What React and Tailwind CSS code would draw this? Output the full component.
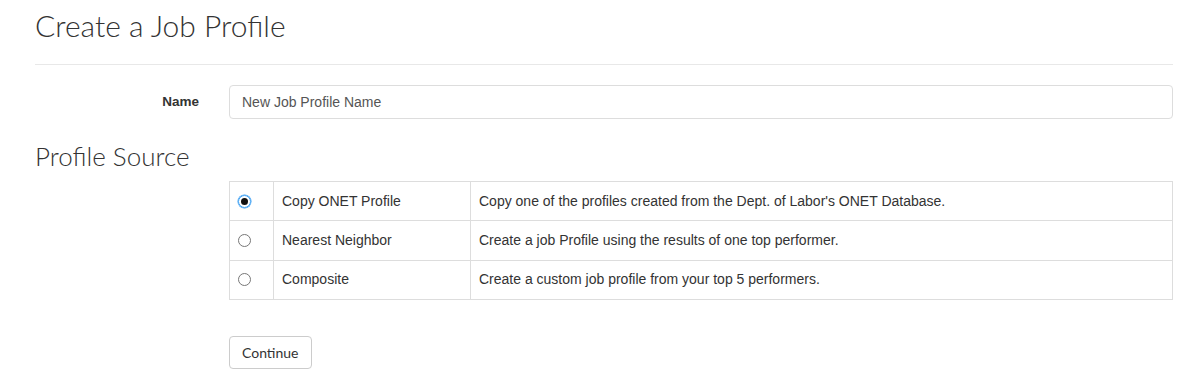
import React, { useState } from 'react';

const sources = [
  { id: 'onet', label: 'Copy ONET Profile', desc: "Copy one of the profiles created from the Dept. of Labor's ONET Database." },
  { id: 'nearest', label: 'Nearest Neighbor', desc: 'Create a job Profile using the results of one top performer.' },
  { id: 'composite', label: 'Composite', desc: 'Create a custom job profile from your top 5 performers.' },
];

export default function App() {
  const [source, setSource] = useState('onet');

  return (
    <div className="w-[1186px] h-[385px] bg-white px-[35px] pr-[13px] text-[#333] font-['Liberation_Sans',Arial,sans-serif] text-[14px]">
      <h1 className="pt-[6px] text-[30px] leading-[38px] font-light text-[#333] font-['Lato',sans-serif]">Create a Job Profile</h1>
      <div className="mt-[20px] border-t border-[#e8e8e8]" />

      <div className="mt-[20px] flex items-center">
        <label className="w-[164px] text-right font-bold text-[13.5px] pr-[30px] box-content">Name</label>
        <input
          className="flex-1 h-[34px] border border-[#ddd] rounded-[4px] px-[12px] text-[14px] text-[#555] placeholder:text-[#555] outline-none"
          placeholder="New Job Profile Name"
        />
      </div>

      <h2 className="mt-[22px] text-[26px] leading-[30px] font-light font-['Lato',sans-serif]">Profile Source</h2>

      <div className="ml-[194px] mt-[10px]">
        <table className="w-full border-collapse border border-[#ddd]">
          <tbody>
            {sources.map((s) => (
              <tr key={s.id} className="h-[39.4px]">
                <td className="w-[44px] border border-[#ddd] pl-[8px] align-middle">
                  <span
                    onClick={() => setSource(s.id)}
                    className={`flex items-center justify-center w-[13px] h-[13px] rounded-full border cursor-pointer ${
                      source === s.id ? 'border-[#3b9ff3] shadow-[0_0_0_0.5px_#3b9ff3]' : 'border-[#777]'
                    }`}
                  >
                    {source === s.id && <span className="w-[7px] h-[7px] rounded-full bg-[#111]" />}
                  </span>
                </td>
                <td className="w-[197px] border border-[#ddd] px-[8px]">{s.label}</td>
                <td className="border border-[#ddd] px-[8px]">{s.desc}</td>
              </tr>
            ))}
          </tbody>
        </table>
      </div>

      <div className="ml-[194px] mt-[36px]">
        <button className="h-[33px] px-[12px] border border-[#ccc] rounded-[4px] bg-white text-[14px] text-[#333] font-['Lato',sans-serif]">
          Continue
        </button>
      </div>
    </div>
  );
}
